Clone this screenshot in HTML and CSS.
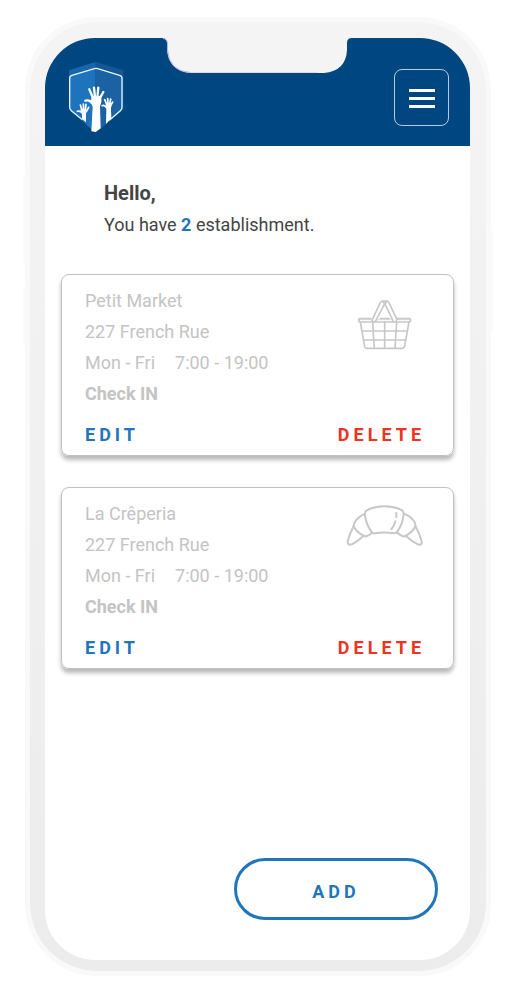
FILE: index.html
```html
<!DOCTYPE html>
<html lang="en">
<head>
<meta charset="utf-8">
<meta name="viewport" content="width=device-width, initial-scale=1">
<title>Establishments</title>
<link rel="stylesheet" href="styles.css">
</head>
<body>
<div class="phone">
  <span class="side-key side-key-mute"></span>
  <span class="side-key side-key-up"></span>
  <span class="side-key side-key-down"></span>
  <span class="side-key side-key-power"></span>
  <div class="screen">
    <svg class="notch" viewBox="0 0 190 35" aria-hidden="true"><path fill="#f4f4f4" d="M0 0Q5 0 5 5V12Q7 33 28 35H162Q184 33 185 12V5Q185 0 190 0Z"/><path fill="none" stroke="#b5b5ee" d="M1 .5Q5 .5 5.500 5V12Q7 33 28 34.500"/><path fill="none" stroke="#dcd6ee" d="M28 34.500H155"/></svg>
    <header class="header">
      <a class="logo" href="#" aria-label="Home">
        <svg width="55" height="70" viewBox="57 36 165 210" aria-hidden="true">
          <path fill="#1e73bd" d="M137 36L57 61V181L137 244Z"/>
          <path fill="#1a62a1" d="M137 36L220 61V181L137 244Z"/>
          <path fill="#0e4f8d" d="M137 36L220 61V80L137 52Z" opacity=".55"/>
          <path fill="#0e4f8d" d="M137 36L57 61V80L137 52Z" opacity=".35"/>
          <path fill="#004680" d="M56 178L98 214L120 240L137 250L160 236L184 211L224 176V250H56Z"/>
          <path fill="#1e73bd" d="M96 211L109 184H137V244L120 235Z"/>
          <path fill="#1a62a1" d="M137 180L183 195L182 211L154 235L137 246Z"/>
          <path fill="none" stroke="#e8f2fa" stroke-width="4" stroke-linejoin="round" d="M97 209L64 182Q59 178 59 172V85Q59 78 66 76L133 56Q138 54 143 56L209 76Q216 78 216 85V172Q216 178 211 182L178 211"/>
          <g fill="#fff" stroke="#fff" stroke-linecap="round" stroke-linejoin="round">
            <path stroke="none" d="M124 244L128 170Q121 158 125 140L152 138Q158 150 150 169L152 235L137 246Z"/>
            <path fill="none" stroke-width="7" d="M129 144L118 118M135 142L132 113M142 142L145 113M149 145L160 126M130 158Q120 149 106 152"/>
            <path fill="none" stroke-width="6" d="M118 153L132 165"/>
          </g>
          <g fill="#fff" stroke="#fff" stroke-linecap="round" stroke-linejoin="round">
            <path stroke="none" d="M91 178L109 177L108 195L108 217L96 207L96 193Z"/>
            <path fill="none" stroke-width="5" d="M96 181L91 165M101 180L100 162M106 181L108 163M109 185L116 172M97 189Q91 181 82 184"/>
            <path stroke="none" d="M167 162L185 160L183 177L184 205L168 222L169 178Z"/>
            <path fill="none" stroke-width="5" d="M170 163L164 149M174 162L173 146M179 162L182 147M181 168L188 156M170 173Q164 164 156 167"/>
          </g>
        </svg>
      </a>
      <button class="menu" type="button" aria-label="Menu">
        <span class="menu-bar"></span><span class="menu-bar"></span><span class="menu-bar"></span>
      </button>
    </header>
    <main class="main">
      <div class="greeting">
        <h1 class="hello">Hello,</h1>
        <p class="summary">You have <strong class="count">2</strong> establishment.</p>
      </div>
      <div class="cards">
        <article class="card">
          <div class="card-top">
            <div class="info">
              <h2 class="name">Petit Market</h2>
              <p>227 French Rue</p>
              <p class="hours"><span>Mon - Fri</span><span>7:00 - 19:00</span></p>
              <p><strong>Check IN</strong></p>
            </div>
            <svg class="icon icon-basket" width="54" height="50" viewBox="54 30 162 150" aria-hidden="true">
              <path fill="#e8e8e8" stroke="none" d="M57 91h152v-4h-152z"/>
              <path d="M92 86H60Q56 86 56 90Q56 96 62 96H205Q212 96 212 91Q212 86 207 86H169M121 86H148"/>
              <path d="M61 96L74 170Q75 175 81 175H186Q192 175 194 169L207 96M98 96L103 175M134 96V175M170 96L165 175M66 123H202M72 150H197"/>
              <path fill="#fff" d="M96 91L121 38Q124 33 128 33H140Q144 33 147 38L170 87L168 96H161L134 41L106 95H98Z"/>
              <path d="M128 34L134 41L141 34"/>
            </svg>
          </div>
          <div class="actions">
            <button class="action edit" type="button">EDIT</button>
            <button class="action delete" type="button">DELETE</button>
          </div>
        </article>
        <article class="card">
          <div class="card-top">
            <div class="info">
              <h2 class="name">La Crêperia</h2>
              <p>227 French Rue</p>
              <p class="hours"><span>Mon - Fri</span><span>7:00 - 19:00</span></p>
              <p><strong>Check IN</strong></p>
            </div>
            <svg class="icon icon-croissant" width="78" height="42" viewBox="33 42 234 126" aria-hidden="true">
              <path d="M95 61Q119 49 148 49Q178 49 202 61Q208 67 205 79Q202 104 187 124Q184 130 177 130Q149 125 119 130Q113 131 109 125Q94 103 90 78Q88 66 95 61Z"/>
              <path d="M90 71Q68 81 58 99Q54 107 58 113Q69 130 87 138Q94 141 100 136Q105 133 111 128"/>
              <path d="M207 71Q230 80 240 99Q243 107 239 113Q228 130 211 138Q204 141 198 136L185 127"/>
              <path d="M56 108Q43 133 38 154Q37 164 46 164Q57 163 85 138M241 108Q254 131 260 154Q262 164 253 164Q242 163 213 138"/>
              <path d="M184 68V82M181 94Q178 107 169 118"/>
            </svg>
          </div>
          <div class="actions">
            <button class="action edit" type="button">EDIT</button>
            <button class="action delete" type="button">DELETE</button>
          </div>
        </article>
      </div>
      <button class="add" type="button">ADD</button>
    </main>
  </div>
</div>
</body>
</html>
```
FILE: styles.css
```css
* {
  box-sizing: border-box;
}

body {
  margin: 0;
  min-height: 100vh;
  padding: 17px 25px 16px;
  display: flex;
  background: #fff;
  color: #444;
  font-family: Roboto, "Liberation Sans", sans-serif;
  font-size: 18px;
}

h1, h2, p {
  margin: 0;
}

button {
  font-family: inherit;
  cursor: pointer;
}

.phone {
  position: relative;
  flex: 1;
  display: flex;
  padding: 16px 16px 11px 15px;
  border: 5px solid #f9f9f9;
  border-radius: 72px;
  background: linear-gradient(#f4f4f4, #ececec) padding-box;
}

.side-key {
  position: absolute;
  left: -7px;
  width: 2px;
  border-radius: 2px 0 0 2px;
  background: #fbfbfb;
}

.side-key-mute {
  top: 152px;
  height: 30px;
}

.side-key-up {
  top: 182px;
  height: 58px;
}

.side-key-down {
  top: 264px;
  height: 60px;
}

.side-key-power {
  top: 209px;
  left: auto;
  right: -7px;
  height: 100px;
}

.screen {
  position: relative;
  flex: 1;
  display: flex;
  flex-direction: column;
  overflow: hidden;
  border-radius: 50px;
  background: #fff;
}

.notch {
  position: absolute;
  top: 0;
  left: 50%;
  width: 190px;
  height: 35px;
  margin-left: -96px;
}

.header {
  display: flex;
  justify-content: space-between;
  align-items: flex-start;
  padding: 24px 21px 14px 24px;
  background: #004680;
}

.logo svg {
  display: block;
}

.menu {
  display: flex;
  flex-direction: column;
  justify-content: center;
  align-items: center;
  gap: 5px;
  width: 55px;
  height: 57px;
  margin-top: 7px;
  padding: 2px 0 0;
  border: 1px solid #b5cadc;
  border-radius: 8px;
  background: none;
}

.menu-bar {
  width: 26px;
  height: 3px;
  background: #fff;
}

.main {
  flex: 1;
  display: flex;
  flex-direction: column;
  padding: 32px 16px 40px;
}

.greeting {
  padding: 0 43px;
  line-height: 31px;
}

.hello {
  font-size: 20px;
  font-weight: 700;
}

.count {
  color: #1f76bd;
}

.cards {
  display: flex;
  flex-direction: column;
  gap: 31px;
  margin-top: 34px;
}

.card {
  padding: 10px 28px 7px 23px;
  border: 1px solid #c1c1c1;
  border-radius: 8px;
  box-shadow: 0 4px 4px rgba(0, 0, 0, 0.28);
}

.card-top {
  display: flex;
  justify-content: space-between;
  align-items: flex-start;
  color: #c4c4c4;
  line-height: 31px;
}

.name {
  font-size: 18px;
  font-weight: 400;
}

.hours {
  display: flex;
  gap: 20px;
}

.icon {
  fill: none;
  stroke: #c8c8c8;
  stroke-width: 5;
  stroke-linecap: round;
  stroke-linejoin: round;
}

.icon-basket {
  margin: 15px 13px 0 0;
}

.icon-croissant {
  margin: 6px 1px 0 0;
  stroke-width: 6;
}

.actions {
  display: flex;
  justify-content: space-between;
  margin-top: 13px;
}

.action {
  padding: 0;
  border: 0;
  background: none;
  font-size: 18px;
  font-weight: 700;
  line-height: 26px;
  letter-spacing: 4px;
}

.edit {
  color: #1f76bd;
}

.delete {
  color: #ee3322;
}

.add {
  align-self: flex-end;
  width: 204px;
  height: 62px;
  margin-top: auto;
  margin-right: 16px;
  padding: 5px 0 0;
  border: 3px solid #1f76bd;
  border-radius: 31px;
  background: #fff;
  color: #1f76bd;
  font-size: 18px;
  font-weight: 700;
  letter-spacing: 4px;
}
```
